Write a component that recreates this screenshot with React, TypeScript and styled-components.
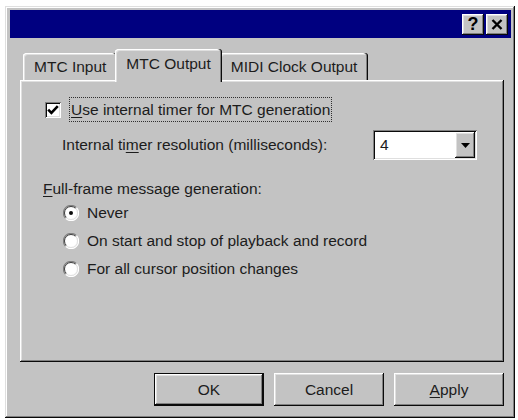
import React from "react";
import styled, { createGlobalStyle } from "styled-components";

const Global = createGlobalStyle`
  html, body { margin: 0; padding: 0; background: #ffffff; }
  body { font-family: "Liberation Sans", Arial, sans-serif; color: #1c1c1c; }
`;

const FACE = "#c3c3c3";

const raisedShadow =
  "inset -1px -1px #0a0a0a, inset 1px 1px #ffffff, inset -2px -2px #808080, inset 2px 2px #dfdfdf";
const sunkenShadow =
  "inset 1px 1px #808080, inset -1px -1px #ffffff, inset 2px 2px #0a0a0a, inset -2px -2px #dfdfdf";

const Window = styled.div`
  box-sizing: border-box;
  margin: 6px 0 0 5px;
  width: 510px;
  height: 412px;
  padding: 4px 4px 0 5px;
  background: ${FACE};
  box-shadow: inset -1px -1px #0a0a0a, inset 1px 1px #dfdfdf, inset -2px -2px #808080,
    inset 2px 2px #ffffff;
  display: flex;
  flex-direction: column;
`;

const TitleBar = styled.div`
  height: 28px;
  background: #000080;
  display: flex;
  align-items: center;
  justify-content: flex-end;
  gap: 2px;
  padding-right: 3px;
`;

const TitleButton = styled.div`
  box-sizing: border-box;
  width: 22px;
  height: 21px;
  background: ${FACE};
  box-shadow: ${raisedShadow};
  display: flex;
  align-items: center;
  justify-content: center;
  font-weight: bold;
  font-size: 18px;
  color: #000;
`;

const Body = styled.div`
  padding: 11px 7px 0 10px;
  display: flex;
  flex-direction: column;
`;

const TabRow = styled.div`
  display: flex;
  align-items: flex-end;
  height: 33px;
  margin-left: 3px;
  margin-bottom: -2px;
  position: relative;
  z-index: 1;
`;

const Tab = styled.div<{ $active?: boolean }>`
  box-sizing: border-box;
  height: ${(p) => (p.$active ? "33px" : "27px")};
  margin: ${(p) => (p.$active ? "0 -2px" : "0 0 2px 0")};
  padding: ${(p) => (p.$active ? "0 11px 3px" : "0 11px")};
  position: relative;
  z-index: ${(p) => (p.$active ? 2 : 1)};
  background: ${FACE};
  border-radius: 3px 3px 0 0;
  box-shadow: inset -1px 0 #0a0a0a, inset -2px 0 #808080, inset 1px 1px #ffffff,
    inset 2px 2px #dfdfdf;
  display: flex;
  align-items: center;
  font-size: 15.5px;
  white-space: nowrap;
`;

const Panel = styled.div`
  box-sizing: border-box;
  height: 282px;
  background: ${FACE};
  box-shadow: ${raisedShadow};
  padding: 17px 0 0 23px;
  display: flex;
  flex-direction: column;
  font-size: 15.5px;
`;

const CheckRow = styled.div`
  height: 25px;
  margin-left: 2px;
  display: flex;
  align-items: center;
  gap: 8px;
`;

const Box = styled.div`
  box-sizing: border-box;
  width: 16px;
  height: 16px;
  background: #ffffff;
  box-shadow: ${sunkenShadow};
  display: flex;
  align-items: center;
  justify-content: center;
`;

const FocusLabel = styled.span`
  box-sizing: border-box;
  height: 25px;
  padding: 0 1px;
  border: 1px dotted #303030;
  display: flex;
  align-items: center;
  white-space: nowrap;
`;

const FieldRow = styled.div`
  margin-top: 8px;
  height: 30px;
  padding-left: 19px;
  display: flex;
  align-items: center;
`;

const FieldLabel = styled.span`
  width: 311px;
  white-space: nowrap;
`;

const Combo = styled.div`
  box-sizing: border-box;
  width: 104px;
  height: 30px;
  background: #ffffff;
  box-shadow: ${sunkenShadow};
  display: flex;
  align-items: center;
  justify-content: space-between;
  padding: 2px 2px 2px 7px;
`;

const ComboButton = styled.div`
  box-sizing: border-box;
  width: 20px;
  height: 26px;
  background: ${FACE};
  box-shadow: ${raisedShadow};
  display: flex;
  align-items: center;
  justify-content: center;
`;

const GroupLabel = styled.div`
  margin-top: 19px;
  line-height: 20px;
  white-space: nowrap;
`;

const RadioRow = styled.div`
  height: 28px;
  margin-left: 20px;
  display: flex;
  align-items: center;
  gap: 8px;
  white-space: nowrap;
`;

const ButtonRow = styled.div`
  margin-top: 11px;
  display: flex;
  justify-content: flex-end;
  gap: 10px;
`;

const PushButton = styled.div<{ $default?: boolean }>`
  box-sizing: border-box;
  width: 110px;
  height: 33px;
  background: ${FACE};
  box-shadow: ${(p) =>
    p.$default
      ? "inset 0 0 0 1px #0a0a0a, inset -2px -2px #0a0a0a, inset 2px 2px #ffffff, inset -3px -3px #808080, inset 3px 3px #dfdfdf"
      : raisedShadow};
  display: flex;
  align-items: center;
  justify-content: center;
  font-size: 15.5px;
`;

const U = styled.span`
  text-decoration: underline;
  text-underline-offset: 2px;
`;

const Radio = ({ checked }: { checked?: boolean }) => (
  <svg width="16" height="16" viewBox="0 0 16 16">
    <circle cx="8" cy="8" r="7" fill="#ffffff" />
    <path d="M2.6 13.4 A7.5 7.5 0 0 1 13.4 2.6" fill="none" stroke="#808080" strokeWidth="1.2" />
    <path d="M3.4 12.6 A6.4 6.4 0 0 1 12.6 3.4" fill="none" stroke="#3a3a3a" strokeWidth="1" />
    <path d="M13.4 2.6 A7.5 7.5 0 0 1 2.6 13.4" fill="none" stroke="#ffffff" strokeWidth="1.2" />
    <path d="M12.6 3.4 A6.4 6.4 0 0 1 3.4 12.6" fill="none" stroke="#dfdfdf" strokeWidth="1" />
    {checked && <circle cx="8" cy="8" r="2" fill="#0a0a0a" />}
  </svg>
);

export default function App() {
  return (
    <>
      <Global />
      <Window>
        <TitleBar>
          <TitleButton>?</TitleButton>
          <TitleButton>
            <svg width="12" height="11" viewBox="0 0 12 11">
              <path d="M1.5 1 L10.5 10 M10.5 1 L1.5 10" stroke="#000" strokeWidth="2.4" />
            </svg>
          </TitleButton>
        </TitleBar>
        <Body>
          <TabRow>
            <Tab>MTC Input</Tab>
            <Tab $active>MTC Output</Tab>
            <Tab>MIDI Clock Output</Tab>
          </TabRow>
          <Panel>
            <CheckRow>
              <Box>
                <svg width="12" height="12" viewBox="0 0 12 12">
                  <path d="M1.2 5.6 L4.4 8.8 L10.8 2.2" fill="none" stroke="#000" strokeWidth="2.6" />
                </svg>
              </Box>
              <FocusLabel>
                <U>U</U>se internal timer for MTC generation
              </FocusLabel>
            </CheckRow>
            <FieldRow>
              <FieldLabel>
                Internal ti<U>m</U>er resolution (milliseconds):
              </FieldLabel>
              <Combo>
                <span>4</span>
                <ComboButton>
                  <svg width="9" height="5" viewBox="0 0 9 5">
                    <path d="M0 0 H9 L4.5 5 Z" fill="#000" />
                  </svg>
                </ComboButton>
              </Combo>
            </FieldRow>
            <GroupLabel>
              <U>F</U>ull-frame message generation:
            </GroupLabel>
            <RadioRow>
              <Radio checked />
              Never
            </RadioRow>
            <RadioRow>
              <Radio />
              On start and stop of playback and record
            </RadioRow>
            <RadioRow>
              <Radio />
              For all cursor position changes
            </RadioRow>
          </Panel>
          <ButtonRow>
            <PushButton $default>OK</PushButton>
            <PushButton>Cancel</PushButton>
            <PushButton>
              <span>
                <U>A</U>pply
              </span>
            </PushButton>
          </ButtonRow>
        </Body>
      </Window>
    </>
  );
}
